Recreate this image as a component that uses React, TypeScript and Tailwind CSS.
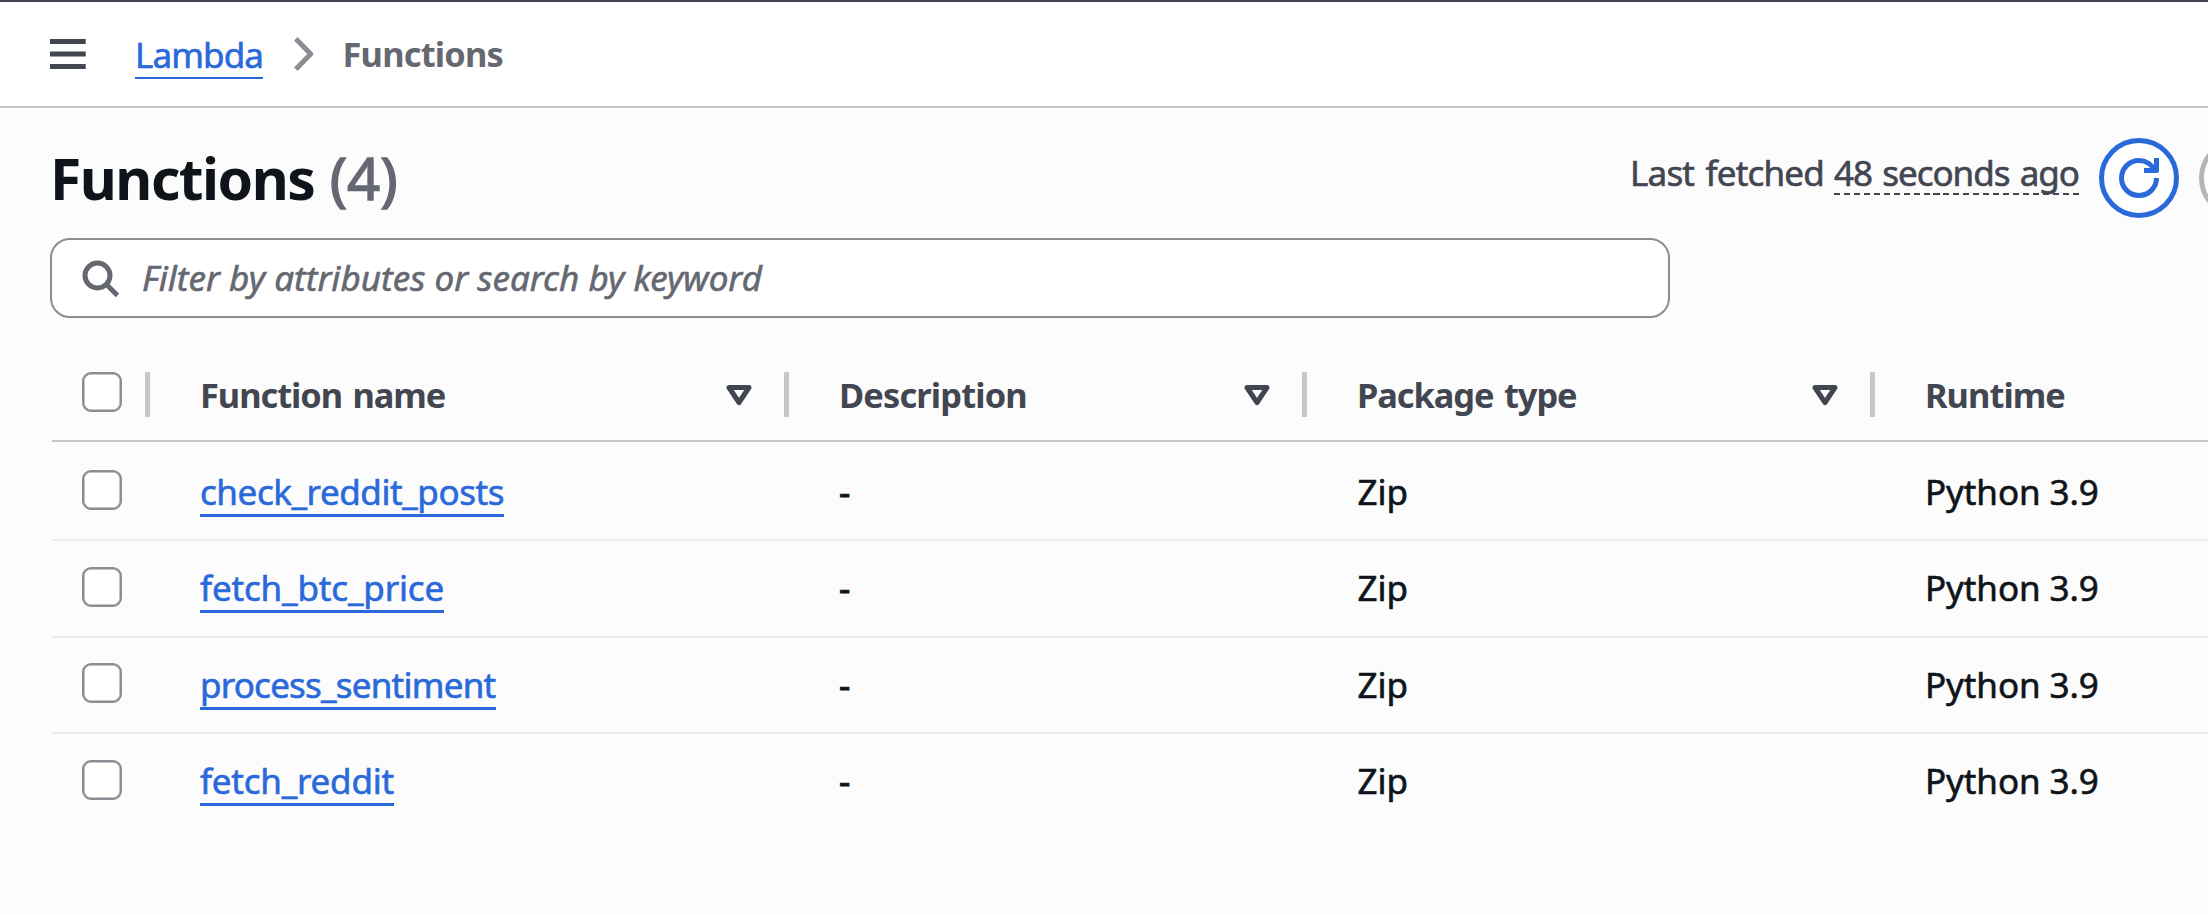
import React from 'react';

type Fn = {
  name: string;
  nameClass: string;
  rowClass: string;
  boxClass: string;
};

const functions: Fn[] = [
  { name: 'check_reddit_posts', nameClass: 'w-[304px] tracking-[-0.43px]', rowClass: 'h-[99px] border-b-2 pt-[25px]', boxClass: 'mt-[3px]' },
  { name: 'fetch_btc_price', nameClass: 'w-[244px] tracking-[-0.16px]', rowClass: 'h-[97px] border-b-2 pt-[22px]', boxClass: 'mt-[4px]' },
  { name: 'process_sentiment', nameClass: 'w-[296px] tracking-[-0.78px]', rowClass: 'h-[96px] border-b-2 pt-[22px]', boxClass: 'mt-[3px]' },
  { name: 'fetch_reddit', nameClass: 'w-[194px] tracking-[-0.22px]', rowClass: 'h-[97px] pt-[22px]', boxClass: 'mt-[4px]' },
];

const GRID = 'ml-[52px] grid grid-cols-[98px_639px_518px_568px_283px]';

function Checkbox({ className = '' }: { className?: string }) {
  return (
    <button
      role="checkbox"
      aria-checked="false"
      className={`block size-10 rounded-[9px] border-2 border-[#8c8c94] bg-white shadow-[inset_0_0_0_0.5px_#8c8c94] ${className}`}
    />
  );
}

function SortIcon() {
  return (
    <svg viewBox="0 0 16 16" className="size-10" fill="none" stroke="#424650" strokeWidth="2" strokeLinejoin="round">
      <path d="M4 5h8l-4 6-4-6z" />
    </svg>
  );
}

function HeaderCell({ label, className }: { label: string; className: string }) {
  return (
    <div className="flex h-[45px] justify-between border-r-[5px] border-[#c6c6cd] pr-[25px] pl-[50px]">
      <span className={`text-[34.4px] leading-[45px] font-bold whitespace-nowrap text-[#424650] ${className}`}>{label}</span>
      <span className="pt-[3px]">
        <SortIcon />
      </span>
    </div>
  );
}

export default function App() {
  return (
    <div className="h-[914px] w-[2208px] overflow-hidden bg-[#fcfcfd] font-['Noto_Sans',sans-serif] text-[35px] text-[#0f141a]">
      <header className="flex h-[108px] border-t-2 border-b-2 border-t-[#424650] border-b-[#c6c6cd] bg-white pl-[50px]">
        <button className="mt-[37px] h-[30px]" aria-label="Menu">
          <svg viewBox="0 0 36 30" className="h-[30px] w-9" fill="#424650">
            <path d="M0 0h35.7v5H0zM0 12.4h35.7v5H0zM0 25h35.7v5H0z" />
          </svg>
        </button>
        <a className="mt-[28px] ml-[49px] h-[49px] w-[128px] border-b-2 border-[#2a69da] leading-[49px] tracking-[-0.9px] whitespace-nowrap text-[#2a69da] [-webkit-text-stroke:0.6px_#2a69da]">
          Lambda
        </a>
        <svg viewBox="0 0 20 34" className="mt-[35px] ml-[31px] h-[34px] w-5" fill="none" stroke="#8c8c94" strokeWidth="5" strokeLinejoin="round">
          <path d="M1.8 1.8 16.7 17 1.8 32.2" />
        </svg>
        <span className="mt-[27px] ml-[28.5px] text-[34.4px] leading-[49px] font-bold tracking-[-0.8px] text-[#656871]">Functions</span>
      </header>

      <section className="flex h-[130px] pl-[50px]">
        <h1 className="mt-[30px] w-[1580px] shrink-0 text-[57px] leading-[80px] font-bold tracking-[-1.5px] whitespace-nowrap">
          Functions{' '}
          <span className="ml-[2px] text-[58px] font-normal tracking-[0px] text-[#656871] [-webkit-text-stroke:1.4px_#656871]">(4)</span>
        </h1>
        <p className="mt-[40px] flex h-[47px] w-[469px] shrink-0 whitespace-nowrap text-[#424650] [-webkit-text-stroke:0.6px_#424650]">
          <span className="w-[204px] shrink-0 leading-[49px] tracking-[-0.8px] [word-spacing:3px]">Last fetched</span>
          <span className="h-[47px] w-[245px] shrink-0 bg-[repeating-linear-gradient(90deg,#424650_0_6px,transparent_6px_9.95px)] bg-[length:100%_2px] bg-bottom bg-no-repeat leading-[49px] tracking-[-1px] [word-spacing:2px]">
            48 seconds ago
          </span>
        </p>
        <button
          aria-label="Refresh"
          className="mt-[30px] flex size-20 shrink-0 items-center justify-center rounded-full border-[5px] border-[#2a69da] bg-white"
        >
          <svg viewBox="0 0 16 16" className="size-10" fill="none" stroke="#2a69da" strokeWidth="2">
            <path d="M15 8c0 3.87-3.13 7-7 7s-7-3.13-7-7 3.13-7 7-7c2.79 0 5.2 1.63 6.33 4" strokeLinejoin="round" />
            <path d="M10 5h5V0" strokeLinejoin="round" />
          </svg>
        </button>
        <button aria-label="Actions" className="mt-[30px] ml-5 h-20 w-60 shrink-0 rounded-full border-[5px] border-[#b4b4bb] bg-white" />
      </section>

      <div className="ml-[50px] flex h-20 w-[1620px] items-center rounded-[20px] border-2 border-[#8c8c94] bg-white pl-7">
        <svg viewBox="0 0 16 16" className="size-10" fill="none" stroke="#656871" strokeWidth="2">
          <circle cx="7" cy="7" r="5" />
          <path d="m15 15-4.5-4.5" />
        </svg>
        <span className="ml-[22px] leading-[50px] tracking-[0.03px] whitespace-nowrap text-[#656871] italic [-webkit-text-stroke:0.6px_#656871]">
          Filter by attributes or search by keyword
        </span>
      </div>

      <div className="mt-[54px] w-[2208px]">
        <div className={`${GRID} h-[70px] border-b-2 border-[#c6c6cd]`}>
          <div className="flex h-[45px] border-r-[5px] border-[#c6c6cd] pl-[30px]">
            <Checkbox />
          </div>
          <HeaderCell label="Function name" className="tracking-[-1.05px] [word-spacing:2.5px]" />
          <HeaderCell label="Description" className="tracking-[-0.85px]" />
          <HeaderCell label="Package type" className="tracking-[-1.05px] [word-spacing:2.5px]" />
          <span className="pl-[50px] text-[34.4px] leading-[45px] font-bold tracking-[-0.95px] text-[#424650]">Runtime</span>
        </div>
        {functions.map((fn) => (
          <div key={fn.name} className={`${GRID} border-[#ebebf0] leading-[49px] ${fn.rowClass}`}>
            <div className="pl-[30px]">
              <Checkbox className={fn.boxClass} />
            </div>
            <div className="pl-[50px]">
              <a className={`block h-[50px] border-b-[3px] border-[#2a69da] leading-[49px] whitespace-nowrap text-[#2a69da] [-webkit-text-stroke:0.6px_#2a69da] ${fn.nameClass}`}>
                {fn.name}
              </a>
            </div>
            <span className="pl-[50px] [-webkit-text-stroke:0.9px_#0f141a]">-</span>
            <span className="pl-[50.5px] [-webkit-text-stroke:0.6px_#0f141a]">Zip</span>
            <span className="pl-[50px] tracking-[-0.1px] [-webkit-text-stroke:0.6px_#0f141a]">Python 3.9</span>
          </div>
        ))}
      </div>
    </div>
  );
}
